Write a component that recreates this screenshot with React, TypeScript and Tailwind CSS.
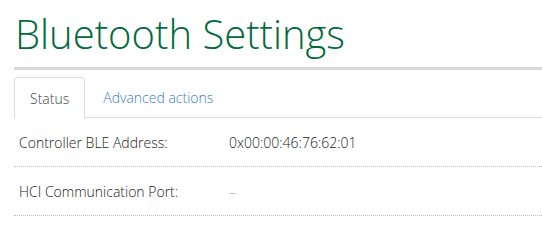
import React from 'react';

const rows = [
    { label: 'Controller BLE Address:', value: '0x00:00:46:76:62:01', muted: false },
    { label: 'HCI Communication Port:', value: '–', muted: true },
];

export default function App() {
    return (
        <div className="min-h-screen bg-white pl-[14px] font-['Open_Sans',sans-serif]">
            {/* Title */}
            <h1 className="mt-[12px] h-[44px] text-[40px] leading-[44px] font-light text-[#026b3c] pl-[1px]">
                Bluetooth Settings
            </h1>
            <div className="mt-[11px] h-[3px] bg-[#d9d9d9]" />

            {/* Tabs */}
            <ul className="mt-[7px] flex h-[41px] border-b border-[#dddddd] text-[14px] font-light">
                <li className="-mb-px flex h-[41px] items-center rounded-t-[4px] border border-b-0 border-[#dddddd] bg-white px-[15px] text-[#444444]">
                    Status
                </li>
                <li className="flex h-[40px] items-center px-[18px] text-[#3a80c8]">
                    Advanced actions
                </li>
            </ul>

            {/* Rows */}
            <div className="text-[14px] font-light">
                {rows.map((r) => (
                    <div key={r.label} className="flex h-[49px] items-center border-b border-dotted border-[#bdbdbd] pl-[5px]">
                        <span className="w-[210px] text-[#1a1a1a]">{r.label}</span>
                        <span className={r.muted ? 'text-[#aaaaaa]' : 'text-[#1a1a1a]'}>{r.value}</span>
                    </div>
                ))}
            </div>
        </div>
    );
}
